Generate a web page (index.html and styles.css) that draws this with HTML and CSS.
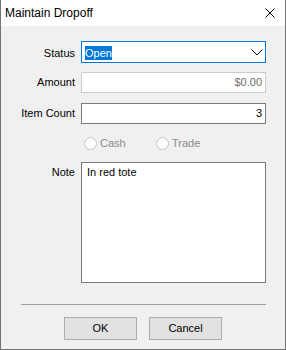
FILE: index.html
```html
<!DOCTYPE html>
<html>
<head>
<meta charset="utf-8">
<title>Maintain Dropoff</title>
<link rel="stylesheet" href="styles.css">
</head>
<body>
<div class="window">
  <div class="titlebar">
    <span class="title">Maintain Dropoff</span>
    <svg class="close" width="10" height="10" viewBox="0 0 10 10"><path d="M0.5 0.5L9.5 9.5M9.5 0.5L0.5 9.5" stroke="#000" stroke-width="1" fill="none"/></svg>
  </div>
  <div class="client">
    <div class="row">
      <div class="label status-label">Status</div>
      <div class="combo">
        <span class="sel">Open</span>
        <svg class="chev" width="12" height="7" viewBox="0 0 12 7"><path d="M0.5 0.5L6 6L11.5 0.5" stroke="#000" stroke-width="1" fill="none"/></svg>
      </div>
    </div>
    <div class="row amount-row">
      <div class="label">Amount</div>
      <div class="field disabled">$0.00</div>
    </div>
    <div class="row count-row">
      <div class="label">Item Count</div>
      <div class="field">3</div>
    </div>
    <div class="row radio-row">
      <div class="label"></div>
      <div class="radios">
        <div class="radio"><span class="circle"></span><span class="rtext">Cash</span></div>
        <div class="radio"><span class="circle"></span><span class="rtext">Trade</span></div>
      </div>
    </div>
    <div class="row note-row">
      <div class="label note-label">Note</div>
      <div class="memo">In red tote</div>
    </div>
    <div class="sep"></div>
    <div class="buttons">
      <div class="btn">OK</div>
      <div class="btn">Cancel</div>
    </div>
  </div>
</div>
</body>
</html>
```

FILE: styles.css
```css
html, body {
  margin: 0;
  padding: 0;
  background: #ffffff;
}
body {
  font-family: "Liberation Sans", Arial, sans-serif;
  font-size: 11px;
  color: #000;
}
.window {
  width: 286px;
  height: 350px;
  box-sizing: border-box;
  border-left: 1px solid #737373;
  border-right: 1px solid #737373;
  border-bottom: 1px solid #737373;
  background: #f0f0f0;
  display: flex;
  flex-direction: column;
}
.titlebar {
  height: 26px;
  background: #ffffff;
  display: flex;
  align-items: center;
  padding-left: 4px;
  padding-right: 10px;
}
.title {
  font-size: 12px;
  line-height: 26px;
  flex: 1;
}
.close {
  display: block;
}
.client {
  padding-top: 15px;
  flex: 1;
}
.row {
  display: flex;
  align-items: center;
}
.label {
  width: 74px;
  margin-right: 6px;
  text-align: right;
  line-height: 13px;
}
.status-label {
  margin-top: 2px;
}
.combo {
  width: 185px;
  height: 22px;
  box-sizing: border-box;
  border: 1px solid #0078d7;
  background: #fff;
  display: flex;
  align-items: center;
  padding-left: 3px;
  padding-right: 2px;
}
.sel {
  display: inline-block;
  background: #0078d7;
  color: #fff;
  line-height: 14px;
  height: 14px;
  margin-top: 2px;
}
.chev {
  display: block;
  margin-left: auto;
  margin-top: 1px;
}
.amount-row {
  margin-top: 9px;
}
.count-row {
  margin-top: 10px;
}
.field {
  width: 185px;
  height: 21px;
  box-sizing: border-box;
  border: 1px solid #7a7a7a;
  background: #fff;
  text-align: right;
  padding-right: 3px;
  line-height: 19px;
}
.field.disabled {
  border-color: #cccccc;
  background: #ffffff;
  color: #6d6d6d;
}
.radio-row {
  margin-top: 13px;
}
.radios {
  display: flex;
  padding-left: 3px;
}
.radio {
  width: 72px;
  display: flex;
  align-items: center;
  color: #8a8a8a;
  line-height: 13px;
}
.circle {
  width: 13px;
  height: 13px;
  box-sizing: border-box;
  border: 1px solid #c4c4c4;
  border-radius: 50%;
  background: #fcfcfc;
  margin-right: 3px;
}
.note-row {
  margin-top: 12px;
  align-items: flex-start;
}
.note-label {
  padding-top: 4px;
}
.memo {
  width: 185px;
  height: 121px;
  box-sizing: border-box;
  border: 1px solid #7a7a7a;
  background: #fff;
  padding: 3px 5px;
  line-height: 13px;
}
.sep {
  margin-top: 21px;
  margin-left: 20px;
  width: 245px;
  height: 1px;
  background: #a0a0a0;
}
.buttons {
  display: flex;
  margin-top: 12px;
  padding-left: 63px;
  gap: 12px;
}
.btn {
  width: 73px;
  height: 23px;
  box-sizing: border-box;
  border: 1px solid #adadad;
  background: #e1e1e1;
  text-align: center;
  line-height: 21px;
}
```
